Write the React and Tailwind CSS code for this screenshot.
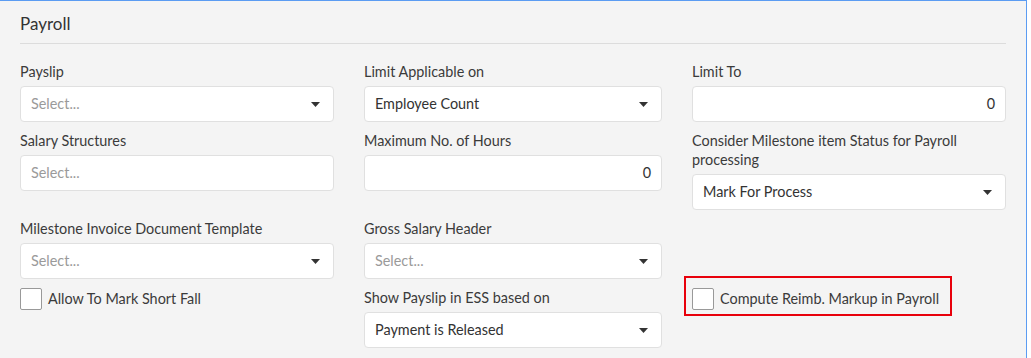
import React from 'react';

const Caret = () => (
  <svg width="9" height="5" viewBox="0 0 9 5" className="shrink-0">
    <path d="M0 0 L9 0 L4.5 5 Z" fill="#333" />
  </svg>
);

const Label = ({ children }) => (
  <div className="text-[14.4px] leading-[19px] text-[#3b3b3b] mb-[5px]">{children}</div>
);

const SelectBox = ({ value, placeholder = 'Select...' }) => (
  <div className="h-[36px] bg-white border border-[#e0e0e0] rounded-[4px] flex items-center justify-between pl-[10px] pr-[13px]">
    <span className={`text-[14.4px] ${value ? 'text-[#333]' : 'text-[#9a9a9a]'}`}>{value || placeholder}</span>
    <Caret />
  </div>
);

const TextBox = ({ value, placeholder }) => (
  <div className="h-[36px] bg-white border border-[#e0e0e0] rounded-[4px] flex items-center justify-end px-[10px]">
    {value !== undefined ? (
      <span className="text-[14.4px] text-[#333]">{value}</span>
    ) : (
      <span className="text-[14.4px] text-[#9a9a9a] mr-auto">{placeholder}</span>
    )}
  </div>
);

const Check = ({ label }) => (
  <div className="flex items-center gap-[6px]">
    <div className="w-[22px] h-[22px] bg-white border border-[#999] rounded-[2px]" />
    <span className="text-[14.4px] text-[#3b3b3b]">{label}</span>
  </div>
);

export default function App() {
  return (
    <div className="w-[1031px] h-[358px] bg-white" style={{ fontFamily: 'Lato, "Open Sans", sans-serif' }}>
      <div className="w-[1027px] h-[358px] bg-[#f4f4f4] border-t border-r border-[#5b9cf2] px-5 pt-[11px]">
        <div className="text-[17px] leading-[24px] text-[#333] pb-[7px] border-b border-[#dcdcdc]">Payroll</div>

        <div className="grid grid-cols-[314px_298px_314px] gap-x-[30px] gap-y-[9px] mt-[18px]">
          <div>
            <Label>Payslip</Label>
            <SelectBox />
          </div>
          <div>
            <Label>Limit Applicable on</Label>
            <SelectBox value="Employee Count" />
          </div>
          <div>
            <Label>Limit To</Label>
            <TextBox value="0" />
          </div>

          <div>
            <Label>Salary Structures</Label>
            <TextBox placeholder="Select..." />
          </div>
          <div>
            <Label>Maximum No. of Hours</Label>
            <TextBox value="0" />
          </div>
          <div>
            <Label>Consider Milestone item Status for Payroll processing</Label>
            <SelectBox value="Mark For Process" />
          </div>

          <div>
            <Label>Milestone Invoice Document Template</Label>
            <SelectBox />
          </div>
          <div>
            <Label>Gross Salary Header</Label>
            <SelectBox />
          </div>
          <div />

          <div>
            <Check label="Allow To Mark Short Fall" />
          </div>
          <div>
            <Label>Show Payslip in ESS based on</Label>
            <SelectBox value="Payment is Released" />
          </div>
          <div className="relative">
            <Check label="Compute Reimb. Markup in Payroll" />
            <div className="absolute left-[-8px] top-[-12px] w-[268px] h-[40px] border-2 border-[#e8000b] pointer-events-none" />
          </div>
        </div>
      </div>
    </div>
  );
}
